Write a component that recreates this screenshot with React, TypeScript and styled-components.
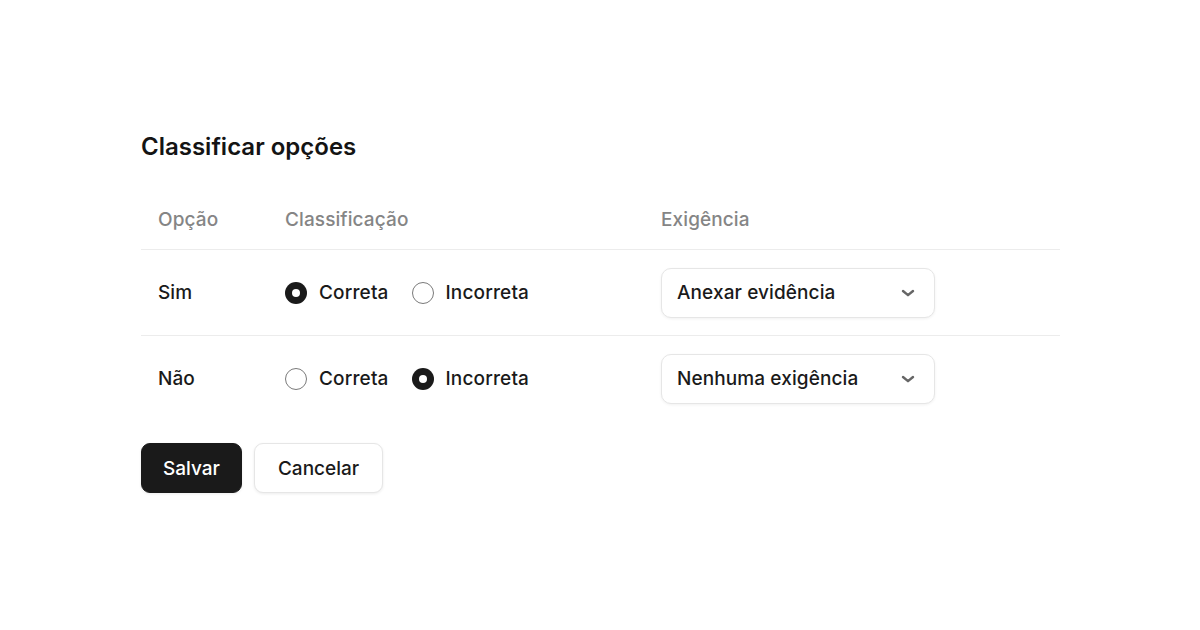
import React, { useState } from 'react';
import styled, { createGlobalStyle } from 'styled-components';

const GlobalStyle = createGlobalStyle`
  * { box-sizing: border-box; }
  html, body {
    margin: 0;
    padding: 0;
    background: #ffffff;
    font-family: Inter, "Noto Sans", "Liberation Sans", sans-serif;
    color: #1a1a1a;
  }
`;

const Page = styled.main`
  width: 1200px;
  height: 630px;
  padding: 131px 140px 0 141px;
`;

const Title = styled.h1`
  margin: 0 0 40px;
  font-size: 24px;
  line-height: 32px;
  font-weight: 600;
  letter-spacing: 0;
  color: #141414;
`;

const Table = styled.div`
  width: 919px;
  display: grid;
  grid-template-columns: 127px 376px 1fr;
`;

const HeadCell = styled.div`
  height: 47px;
  padding: 0 0 13px 17px;
  display: flex;
  align-items: center;
  font-size: 19px;
  letter-spacing: 0.1px;
  font-weight: 500;
  color: #858585;
  border-bottom: 1px solid #ececec;
`;

const Cell = styled.div<{ $last?: boolean }>`
  height: 86px;
  padding-left: 17px;
  display: flex;
  align-items: center;
  font-size: 19px;
  border-bottom: 1px solid ${({ $last }) => ($last ? 'transparent' : '#ececec')};
`;

const OptionName = styled.span`
  font-weight: 500;
  letter-spacing: 0.1px;
  color: #1a1a1a;
`;

const RadioGroup = styled.div`
  display: flex;
  align-items: center;
  gap: 23px;
`;

const RadioLabel = styled.label`
  display: flex;
  align-items: center;
  gap: 12px;
  font-size: 19px;
  letter-spacing: 0.15px;
  font-weight: 500;
  color: #1a1a1a;
  cursor: pointer;
`;

const RadioDot = styled.span<{ $checked: boolean }>`
  width: 22px;
  height: 22px;
  border-radius: 50%;
  flex-shrink: 0;
  background: ${({ $checked }) => ($checked ? '#1a1a1a' : '#ffffff')};
  border: ${({ $checked }) => ($checked ? 'none' : '1.5px solid #7a7a7a')};
  display: flex;
  align-items: center;
  justify-content: center;

  &::after {
    content: '';
    width: 8px;
    height: 8px;
    border-radius: 50%;
    background: #ffffff;
    display: ${({ $checked }) => ($checked ? 'block' : 'none')};
  }
`;

const Select = styled.button`
  width: 274px;
  height: 50px;
  padding: 0 17px 0 15px;
  display: flex;
  align-items: center;
  justify-content: space-between;
  background: #ffffff;
  border: 1px solid #e6e6e6;
  border-radius: 10px;
  box-shadow: 0 1px 3px rgba(0, 0, 0, 0.06);
  font-family: inherit;
  font-size: 19px;
  letter-spacing: 0.1px;
  font-weight: 500;
  color: #1a1a1a;
  cursor: pointer;
`;

const Actions = styled.div`
  margin-top: 21px;
  display: flex;
  gap: 12px;
`;

const Button = styled.button<{ $primary?: boolean }>`
  height: 50px;
  padding: 0 ${({ $primary }) => ($primary ? '21px' : '23px')};
  border-radius: 9px;
  font-family: inherit;
  font-size: 19px;
  font-weight: 500;
  cursor: pointer;
  background: ${({ $primary }) => ($primary ? '#1a1a1a' : '#ffffff')};
  color: ${({ $primary }) => ($primary ? '#ffffff' : '#1a1a1a')};
  border: 1px solid ${({ $primary }) => ($primary ? '#1a1a1a' : '#e6e6e6')};
  box-shadow: 0 1px 3px rgba(0, 0, 0, 0.08);
`;

const Chevron = () => (
  <svg width="18" height="18" viewBox="0 0 18 18" fill="none">
    <path d="M4 7l5 4.2 5-4.2" stroke="#666" strokeWidth="2.4" strokeLinecap="round" strokeLinejoin="round" />
  </svg>
);

type Row = { name: string; correct: boolean; requirement: string };

const initialRows: Row[] = [
  { name: 'Sim', correct: true, requirement: 'Anexar evidência' },
  { name: 'Não', correct: false, requirement: 'Nenhuma exigência' },
];

export default function App() {
  const [rows, setRows] = useState(initialRows);

  const setCorrect = (index: number, correct: boolean) =>
    setRows(rows.map((r, i) => (i === index ? { ...r, correct } : r)));

  return (
    <>
      <GlobalStyle />
      <Page>
        <Title>Classificar opções</Title>
        <Table>
          <HeadCell>Opção</HeadCell>
          <HeadCell>Classificação</HeadCell>
          <HeadCell>Exigência</HeadCell>
          {rows.map((row, i) => {
            const last = i === rows.length - 1;
            return (
              <React.Fragment key={row.name}>
                <Cell $last={last}>
                  <OptionName>{row.name}</OptionName>
                </Cell>
                <Cell $last={last}>
                  <RadioGroup>
                    <RadioLabel onClick={() => setCorrect(i, true)}>
                      <RadioDot $checked={row.correct} />
                      Correta
                    </RadioLabel>
                    <RadioLabel onClick={() => setCorrect(i, false)}>
                      <RadioDot $checked={!row.correct} />
                      Incorreta
                    </RadioLabel>
                  </RadioGroup>
                </Cell>
                <Cell $last={last}>
                  <Select>
                    {row.requirement}
                    <Chevron />
                  </Select>
                </Cell>
              </React.Fragment>
            );
          })}
        </Table>
        <Actions>
          <Button $primary>Salvar</Button>
          <Button>Cancelar</Button>
        </Actions>
      </Page>
    </>
  );
}
